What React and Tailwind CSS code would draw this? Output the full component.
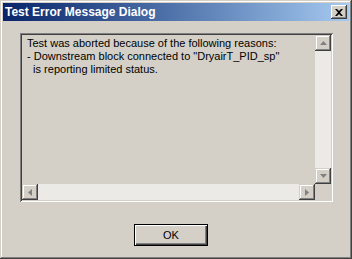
const UpArrow = () => (
  <svg width="7" height="4" viewBox="0 0 7 4">
    <path d="M3.5 0 L7 4 L0 4 Z" fill="#808080" />
  </svg>
);

const DownArrow = () => (
  <svg width="7" height="4" viewBox="0 0 7 4">
    <path d="M0 0 L7 0 L3.5 4 Z" fill="#808080" />
  </svg>
);

const LeftArrow = () => (
  <svg width="4" height="7" viewBox="0 0 4 7">
    <path d="M4 0 L4 7 L0 3.5 Z" fill="#808080" />
  </svg>
);

const RightArrow = () => (
  <svg width="4" height="7" viewBox="0 0 4 7">
    <path d="M0 0 L4 3.5 L0 7 Z" fill="#808080" />
  </svg>
);

const ScrollButton = ({ children }) => (
  <div className="w-[16px] h-[16px] flex items-center justify-center bg-[#d4d0c8] shadow-[inset_-1px_-1px_#404040,inset_1px_1px_#d4d0c8,inset_-2px_-2px_#808080,inset_2px_2px_#ffffff]">
    {children}
  </div>
);

const App = () => {
  return (
    <div
      className="w-[352px] h-[259px] bg-[#d4d0c8] p-[3px] flex flex-col shadow-[inset_-1px_-1px_#404040,inset_1px_1px_#d4d0c8,inset_-2px_-2px_#808080,inset_2px_2px_#ffffff]"
      style={{ fontFamily: '"Liberation Sans", Arial, sans-serif' }}
    >
      {/* title bar */}
      <div className="h-[18px] flex items-center justify-between bg-linear-to-r from-[#0a246a] to-[#a6caf0] pl-[2px] pr-[2px]">
        <span className="text-white font-bold text-[12px] leading-none">
          Test Error Message Dialog
        </span>
        <div className="w-[16px] h-[14px] flex items-center justify-center bg-[#d4d0c8] shadow-[inset_-1px_-1px_#404040,inset_1px_1px_#ffffff,inset_-2px_-2px_#808080]">
          <svg width="8" height="7" viewBox="0 0 8 7">
            <path d="M0 0 L2 0 L4 2 L6 0 L8 0 L5 3.5 L8 7 L6 7 L4 5 L2 7 L0 7 L3 3.5 Z" fill="#000" />
          </svg>
        </div>
      </div>

      {/* message box */}
      <div className="mt-[12px] ml-[17px] w-[313px] h-[169px] p-[2px] shadow-[inset_1px_1px_#808080,inset_-1px_-1px_#ffffff,inset_2px_2px_#404040,inset_-2px_-2px_#d4d0c8]">
        <div className="w-full h-full grid grid-cols-[1fr_16px] grid-rows-[1fr_16px]">
          <div className="pl-[5px] pt-[2px] text-[11px] leading-[13px] text-black whitespace-pre overflow-hidden">
            {"Test was aborted because of the following reasons:\n- Downstream block connected to \"DryairT_PID_sp\"\n  is reporting limited status."}
          </div>
          <div className="flex flex-col bg-[#eceae6]">
            <ScrollButton>
              <UpArrow />
            </ScrollButton>
            <div className="flex-1" />
            <ScrollButton>
              <DownArrow />
            </ScrollButton>
          </div>
          <div className="flex bg-[#eceae6]">
            <ScrollButton>
              <LeftArrow />
            </ScrollButton>
            <div className="flex-1" />
            <ScrollButton>
              <RightArrow />
            </ScrollButton>
          </div>
          <div className="bg-[#d4d0c8]" />
        </div>
      </div>

      {/* OK button */}
      <div className="mt-[20px] ml-[131px]">
        <button className="w-[74px] h-[22px] border border-black bg-[#d4d0c8] text-[11px] text-black shadow-[inset_1px_1px_#ffffff,inset_-1px_-1px_#404040,inset_-2px_-2px_#808080]">
          OK
        </button>
      </div>
    </div>
  );
};

export default App;
